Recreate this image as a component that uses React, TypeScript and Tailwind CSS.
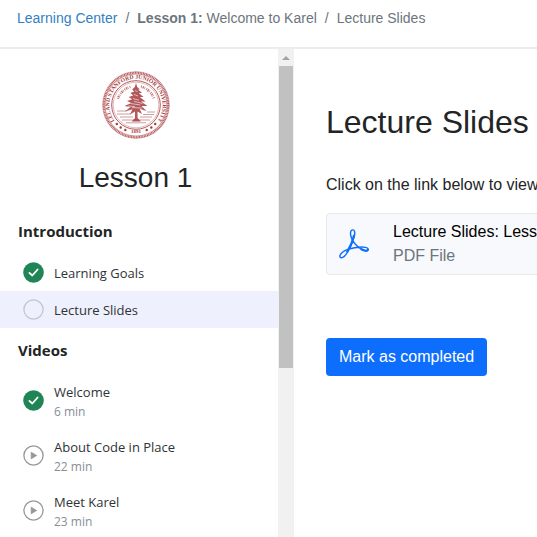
import React from "react";

type Status = "done" | "open" | "video";
type Item = { title: string; length?: string; status: Status; active?: boolean };
type Section = { title: string; items: Item[] };

const sections: Section[] = [
  {
    title: "Introduction",
    items: [
      { title: "Learning Goals", status: "done" },
      { title: "Lecture Slides", status: "open", active: true },
    ],
  },
  {
    title: "Videos",
    items: [
      { title: "Welcome", length: "6 min", status: "done" },
      { title: "About Code in Place", length: "22 min", status: "video" },
      { title: "Meet Karel", length: "23 min", status: "video" },
    ],
  },
];

function StatusIcon({ status }: { status: Status }) {
  return (
    <svg viewBox="0 0 21 21" className="size-[21px] shrink-0" aria-hidden="true">
      {status === "done" && (
        <>
          <circle cx="10.5" cy="10.5" r="10.3" fill="#1f8556" />
          <path d="M6.4 10.9 L9.3 13.5 L14.6 7.5" fill="none" stroke="#fff" strokeWidth="1.8" strokeLinecap="round" strokeLinejoin="round" />
        </>
      )}
      {status === "open" && <circle cx="10.5" cy="10.5" r="9.6" fill="none" stroke="#c3c5d0" strokeWidth="1.3" />}
      {status === "video" && (
        <>
          <circle cx="10.5" cy="10.5" r="9.6" fill="none" stroke="#979797" strokeWidth="1.3" />
          <path d="M8.2 7.2 L13.6 10.5 L8.2 13.8 Z" fill="#979797" stroke="#979797" strokeWidth="0.8" strokeLinejoin="round" />
        </>
      )}
    </svg>
  );
}

function Seal() {
  return (
    <svg viewBox="0 0 68 68" className="size-[68px]" role="img" aria-label="University seal">
      <defs>
        <path id="outerArc" d="M15.6 53.5 A26.6 26.6 0 1 1 52.4 53.5" />
      </defs>
      <g fill="none" stroke="#b4575a">
        <circle cx="34" cy="34" r="32.2" strokeWidth="2" strokeDasharray="1 0.6" />
        <circle cx="34" cy="34" r="33.3" strokeWidth="0.5" />
        <circle cx="34" cy="34" r="31" strokeWidth="0.6" />
        <circle cx="34" cy="34" r="24.3" strokeWidth="1" />
        <circle cx="34" cy="34" r="22.8" strokeWidth="0.4" />
        <path d="M15.9 27.8 A19.1 19.1 0 0 1 29 15.6 M39 15.6 A19.1 19.1 0 0 1 52.1 27.8" strokeWidth="2.6" strokeDasharray="0.8 0.9 1.3 0.7 0.6 1.4" opacity="0.85" />
        <path d="M15 40 H25 M45 41 H53 M15 43 H29 M41 43.5 H52 M18 46 H31 M38 46 H50 M20 49 H48 M24 51.8 H44" strokeWidth="0.8" opacity="0.75" />
      </g>
      <g fill="#a5393d" fontFamily="Liberation Serif, serif">
        <text fontSize="5.7" fontWeight="bold">
          <textPath href="#outerArc" startOffset="50%" textAnchor="middle">LELAND STANFORD JUNIOR UNIVERSITY</textPath>
        </text>
        <text x="34" y="62" fontSize="5" fontWeight="bold" textAnchor="middle">1891</text>
        <circle cx="14.8" cy="53" r="1.2" />
        <circle cx="18.7" cy="56.5" r="1.2" />
        <circle cx="23.3" cy="59" r="1.2" />
        <circle cx="53.2" cy="53" r="1.2" />
        <circle cx="49.3" cy="56.5" r="1.2" />
        <circle cx="44.7" cy="59" r="1.2" />
        <path
          opacity="0.85"
          d="M34 12 L35.2 16 L38 18.4 L36 18.6 L40 22 L36.8 22 L41.5 26 L37.8 26 L43.5 30.5 L39 30.6 L45.5 35 L39.6 34.9 L44.5 40 L37.6 37.8 L40 43 L35.5 40.4 L35.6 47 L39 50.5 H29.6 L33 47 L33 40.4 L28 43.4 L30.4 38.2 L23 40.4 L28.4 36 L22.5 35 L29.3 32 L25 30 L30.2 28.2 L26.6 26 L31.3 24.4 L28.4 22 L32.2 20.6 L30.2 18.4 L32.8 16 Z"
        />
      </g>
      <path d="M31 27.6 L37 29.2 M28.6 32.5 L38.4 34 M32 23.4 L36 25 M30 36.6 L40.4 37 M33 19.6 L35.5 20.6 M32 30.3 L40.5 32.5 M26 35 L33 35.6" stroke="#fff" strokeWidth="0.8" opacity="0.75" />
    </svg>
  );
}

function AcrobatIcon() {
  return (
    <svg viewBox="0 0 30 30" className="size-[30px] shrink-0" fill="none" stroke="#0d6efd" aria-hidden="true">
      <path
        strokeWidth="1.4"
        strokeLinejoin="round"
        d="M13.8 0.9 C11.2 0.9 11 5 12.3 8.6 C13.8 12.8 17.8 17.3 21.8 20 C25 22.1 29.2 22.6 29.2 20.5 C29.2 18.3 24.8 17.8 20 18.2 C15 18.6 10 19.5 6 21.7 C2.8 23.4 0.2 26.2 1 27.9 C1.9 29.8 5 28.4 7.4 24.8 C10.4 20.2 13.7 13.5 15.2 7.8 C16.3 3.6 15.8 0.9 13.8 0.9 Z"
      />
      <path strokeWidth="2.2" strokeLinecap="round" d="M15 6.5 C13.6 12.5 11 18.4 8.4 22.6 M22.5 20.2 C25.4 21.8 28 22 28.8 20.9" />
    </svg>
  );
}

function SidebarScrollbar() {
  return (
    <div className="flex w-4 shrink-0 flex-col items-center bg-[#f1f1f1]" aria-hidden="true">
      <div className="flex h-[17px] items-center">
        <svg viewBox="0 0 8 4" className="h-1 w-2">
          <path d="M0 4 L4 0 L8 4 Z" fill="#a3a3a3" />
        </svg>
      </div>
      <div className="h-[302px] w-[14px] bg-[#c1c1c1]" />
    </div>
  );
}

function LessonItem({ item }: { item: Item }) {
  return (
    <li>
      <a
        href="#"
        aria-current={item.active ? "page" : undefined}
        className={`flex items-center gap-[10px] pl-[23px] ${item.length ? "h-[55px]" : "h-[37px]"} ${item.active ? "bg-[#eef0fd]" : ""}`}
      >
        <StatusIcon status={item.status} />
        <span className="flex flex-col">
          <span className="text-[13px] leading-[22px] text-[#303336]">{item.title}</span>
          {item.length && <span className="text-[12px] leading-[18px] text-[#868e96]">{item.length}</span>}
        </span>
      </a>
    </li>
  );
}

export default function App() {
  return (
    <div className="flex h-screen flex-col overflow-hidden bg-white font-['Liberation_Sans',Arial,sans-serif] text-[#222426]">
      <nav aria-label="Breadcrumb" className="h-[49px] shrink-0 border-b-2 border-[#ececf1] pl-[17px] pt-2">
        <ol className="flex gap-2 whitespace-nowrap text-[14px] leading-5 text-[#6c757d]">
          <li>
            <a href="#" className="text-[#337fc1]">Learning Center</a>
          </li>
          <li aria-hidden="true">/</li>
          <li>
            <b>Lesson 1:</b> Welcome to Karel
          </li>
          <li aria-hidden="true">/</li>
          <li aria-current="page">Lecture Slides</li>
        </ol>
      </nav>

      <div className="flex min-h-0 grow">
        <aside className="flex w-[294px] shrink-0">
          <div className="grow overflow-hidden">
            <div className="flex flex-col items-center pr-[7px] pt-[22px]">
              <Seal />
              <h2 className="mt-[22px] text-[28px] leading-[34px]">Lesson 1</h2>
            </div>
            <div className="mt-6 font-['Open_Sans','Noto_Sans',sans-serif]">
              {sections.map((section) => (
                <section key={section.title} className="mb-[10px]">
                  <h3 className="mb-[11px] pl-[18px] text-[15px] font-bold leading-6">{section.title}</h3>
                  <ul>
                    {section.items.map((item) => (
                      <LessonItem key={item.title} item={item} />
                    ))}
                  </ul>
                </section>
              ))}
            </div>
          </div>
          <SidebarScrollbar />
        </aside>

        <main className="flex min-w-0 grow flex-col items-start overflow-hidden whitespace-nowrap pl-8 pt-[54px]">
          <h1 className="text-[32px] leading-[38px]">Lecture Slides</h1>
          <p className="mt-8 text-[16px] leading-6">Click on the link below to view the slides</p>
          <a
            href="#"
            className="mt-4 flex h-[62px] w-full min-w-[320px] items-center gap-6 rounded border border-[#e6e8ea] bg-[#f8f9fc] pl-3"
          >
            <AcrobatIcon />
            <span className="flex flex-col text-[16px] leading-6">
              <span className="text-black">Lecture Slides: Lesson 1</span>
              <span className="text-[#6c757d]">PDF File</span>
            </span>
          </a>
          <button type="button" className="mt-[63px] h-[38px] rounded bg-[#0d6efd] px-[13px] text-[16px] leading-6 text-white">
            Mark as completed
          </button>
        </main>
      </div>
    </div>
  );
}
